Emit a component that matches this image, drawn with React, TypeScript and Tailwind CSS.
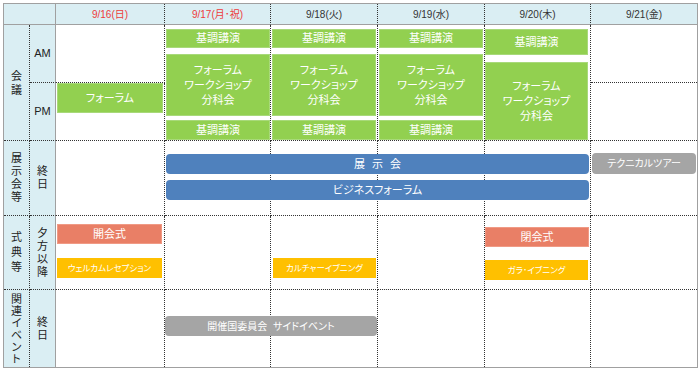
import React from "react";

const colStart = ["", "col-start-1", "col-start-2", "col-start-3", "col-start-4", "col-start-5", "col-start-6", "col-start-7", "col-start-8"];
const rowStart = ["", "row-start-1", "row-start-2", "row-start-3", "row-start-4", "row-start-5", "row-start-6"];

const dates = [
  { t: "9/16(日)", red: true },
  { t: "9/17(月･祝)", red: true },
  { t: "9/18(火)", red: false },
  { t: "9/19(水)", red: false },
  { t: "9/20(木)", red: false },
  { t: "9/21(金)", red: false },
];

const green = "bg-[#92d050] border border-[#a8d97a] text-white flex items-center justify-center text-center";

function V({ text, lh = "leading-[13px]" }: { text: string; lh?: string }) {
  return (
    <div className={`flex flex-col items-center text-[11px] ${lh}`}>
      {text.split("").map((c, i) => (
        <span key={i}>{c}</span>
      ))}
    </div>
  );
}

function DateCell({ col, row, last, lastRow, span2, cls = "", children }: { col: number; row: number; last?: boolean; lastRow?: boolean; span2?: boolean; cls?: string; children?: React.ReactNode }) {
  const r = last ? "" : "border-r";
  const b = lastRow ? "" : "border-b";
  return (
    <div className={`${colStart[col]} ${rowStart[row]} ${span2 ? "row-span-2" : ""} ${r} ${b} border-dotted border-[#333] ${cls}`}>
      {children}
    </div>
  );
}

function ForumStack({ pr = "pr-0" }: { pr?: string }) {
  return (
    <div className={`flex flex-col h-full pt-[4px] pl-[1px] ${pr}`}>
      <div className={`${green} h-[19px] text-[11px]`}>基調講演</div>
      <div className={`${green} h-[62px] mt-[6px] text-[11px] leading-[15px] flex-col`}>
        <span>フォーラム</span>
        <span>ワークショップ</span>
        <span>分科会</span>
      </div>
      <div className={`${green} h-[20px] mt-[4px] text-[11px]`}>基調講演</div>
    </div>
  );
}

export default function App() {
  const leftBg = "bg-[#daeef3]";
  const col1 = `${leftBg} border-r border-b border-dotted border-[#333] flex items-center justify-center text-[#222]`;
  const col2 = `${leftBg} border-r border-b border-dotted border-b-[#333] border-r-[#a0a0a0] [border-right-style:solid] flex items-center justify-center text-[#222]`;
  return (
    <div
      className="w-[700px] h-[370px] bg-white pt-[3px] pl-[3px]"
      style={{ fontFamily: '"Liberation Sans", "Noto Sans CJK JP", sans-serif', fontFeatureSettings: '"palt"' }}
    >
      <div className="inline-grid border border-[#a0a0a0] grid-cols-[26px_26px_109px_106px_107px_107px_106px_106px] grid-rows-[21px_58px_58px_75px_74px_77px]">
        {/* header */}
        <div className={`col-start-1 col-span-2 row-start-1 ${leftBg} border-r border-b border-[#a0a0a0]`} />
        {dates.map((d, i) => (
          <div
            key={d.t}
            className={`${colStart[i + 3]} row-start-1 ${leftBg} ${i < 5 ? "border-r" : ""} border-b border-dotted border-r-[#333] border-b-[#a0a0a0] [border-bottom-style:solid] flex items-center justify-center text-[10px] ${d.red ? "text-[#ee3b3b]" : "text-[#333]"}`}
          >
            {d.t}
          </div>
        ))}

        {/* left columns */}
        <div className={`col-start-1 row-start-2 row-span-2 ${col1}`}>
          <V text="会議" lh="leading-[14px]" />
        </div>
        <div className={`col-start-2 row-start-2 ${col2} text-[11px]`}>AM</div>
        <div className={`col-start-2 row-start-3 ${col2} text-[11px]`}>PM</div>

        <div className={`col-start-1 row-start-4 ${col1}`}>
          <V text="展示会等" />
        </div>
        <div className={`col-start-2 row-start-4 ${col2}`}>
          <V text="終日" />
        </div>

        <div className={`col-start-1 row-start-5 ${col1}`}>
          <V text="式典等" lh="leading-[15px]" />
        </div>
        <div className={`col-start-2 row-start-5 ${col2}`}>
          <V text="夕方以降" />
        </div>

        <div className={`col-start-1 row-start-6 ${leftBg} border-r border-dotted border-[#333] flex items-center justify-center text-[#222]`}>
          <V text="関連イベント" lh="leading-[12px]" />
        </div>
        <div className={`col-start-2 row-start-6 ${leftBg} border-r border-[#a0a0a0] flex items-center justify-center text-[#222]`}>
          <V text="終日" />
        </div>

        {/* 会議 rows */}
        <DateCell col={3} row={2} />
        <DateCell col={3} row={3} cls="pl-[1px] pr-[1px]">
          <div className={`${green} h-[30px] text-[11px]`}>フォーラム</div>
        </DateCell>
        <DateCell col={4} row={2} span2>
          <ForumStack />
        </DateCell>
        <DateCell col={5} row={2} span2>
          <ForumStack pr="pr-[1px]" />
        </DateCell>
        <DateCell col={6} row={2} span2>
          <ForumStack pr="pr-[1px]" />
        </DateCell>
        <DateCell col={7} row={2} span2>
          <div className="flex flex-col h-full pt-[4px] pr-[2px]">
            <div className={`${green} h-[26px] text-[11px]`}>基調講演</div>
            <div className={`${green} h-[78px] mt-[7px] text-[11px] leading-[15px] flex-col`}>
              <span>フォーラム</span>
              <span>ワークショップ</span>
              <span>分科会</span>
            </div>
          </div>
        </DateCell>
        <DateCell col={8} row={2} last />
        <DateCell col={8} row={3} last />

        {/* 展示会 row */}
        <DateCell col={3} row={4} />
        <DateCell col={4} row={4} />
        <DateCell col={5} row={4} />
        <DateCell col={6} row={4} />
        <DateCell col={7} row={4} />
        <DateCell col={8} row={4} last cls="pt-[12px] px-[1px]">
          <div className="h-[21px] rounded-[4px] bg-[#a5a5a5] text-white text-[10px] flex items-center justify-center">テクニカルツアー</div>
        </DateCell>
        <div className="col-start-4 col-span-4 row-start-4 flex flex-col pt-[13px] pl-[1px] pr-[2px] gap-[6px]">
          <div className="h-[20px] rounded-[4px] bg-[#4f81bd] text-white text-[11px] flex items-center justify-center gap-[7px]">
            <span>展</span>
            <span>示</span>
            <span>会</span>
          </div>
          <div className="h-[20px] rounded-[4px] bg-[#4f81bd] text-white text-[11px] flex items-center justify-center">ビジネスフォーラム</div>
        </div>

        {/* 式典 row */}
        <DateCell col={3} row={5} cls="flex flex-col pt-[8px] pl-[1px] pr-[2px]">
          <div className="h-[20px] bg-[#e97f66] border border-[#f09a85] text-white text-[11px] flex items-center justify-center">開会式</div>
          <div className="h-[20px] mt-[14px] bg-[#ffc000] text-white text-[8.5px] flex items-center justify-center">ウェルカムレセプション</div>
        </DateCell>
        <DateCell col={4} row={5} />
        <DateCell col={5} row={5} cls="flex flex-col pt-[42px] pl-[2px] pr-[1px]">
          <div className="h-[20px] bg-[#ffc000] text-white text-[8.5px] flex items-center justify-center">カルチャーイブニング</div>
        </DateCell>
        <DateCell col={6} row={5} />
        <DateCell col={7} row={5} cls="flex flex-col pt-[11px] pr-[1px]">
          <div className="h-[20px] bg-[#e97f66] border border-[#f09a85] text-white text-[11px] flex items-center justify-center">閉会式</div>
          <div className="h-[20px] mt-[13px] bg-[#ffc000] text-white text-[8.5px] flex items-center justify-center mr-[1px]">ガラ･イブニング</div>
        </DateCell>
        <DateCell col={8} row={5} last />

        {/* 関連イベント row */}
        <DateCell col={3} row={6} lastRow />
        <DateCell col={4} row={6} lastRow />
        <DateCell col={5} row={6} lastRow />
        <DateCell col={6} row={6} lastRow />
        <DateCell col={7} row={6} lastRow />
        <DateCell col={8} row={6} last lastRow />
        <div className="col-start-4 col-span-2 row-start-6 pt-[26px] pr-[1px]">
          <div className="h-[20px] rounded-[4px] bg-[#a5a5a5] text-white text-[10px] flex items-center justify-center">開催国委員会&nbsp;&nbsp;サイドイベント</div>
        </div>
      </div>
    </div>
  );
}
